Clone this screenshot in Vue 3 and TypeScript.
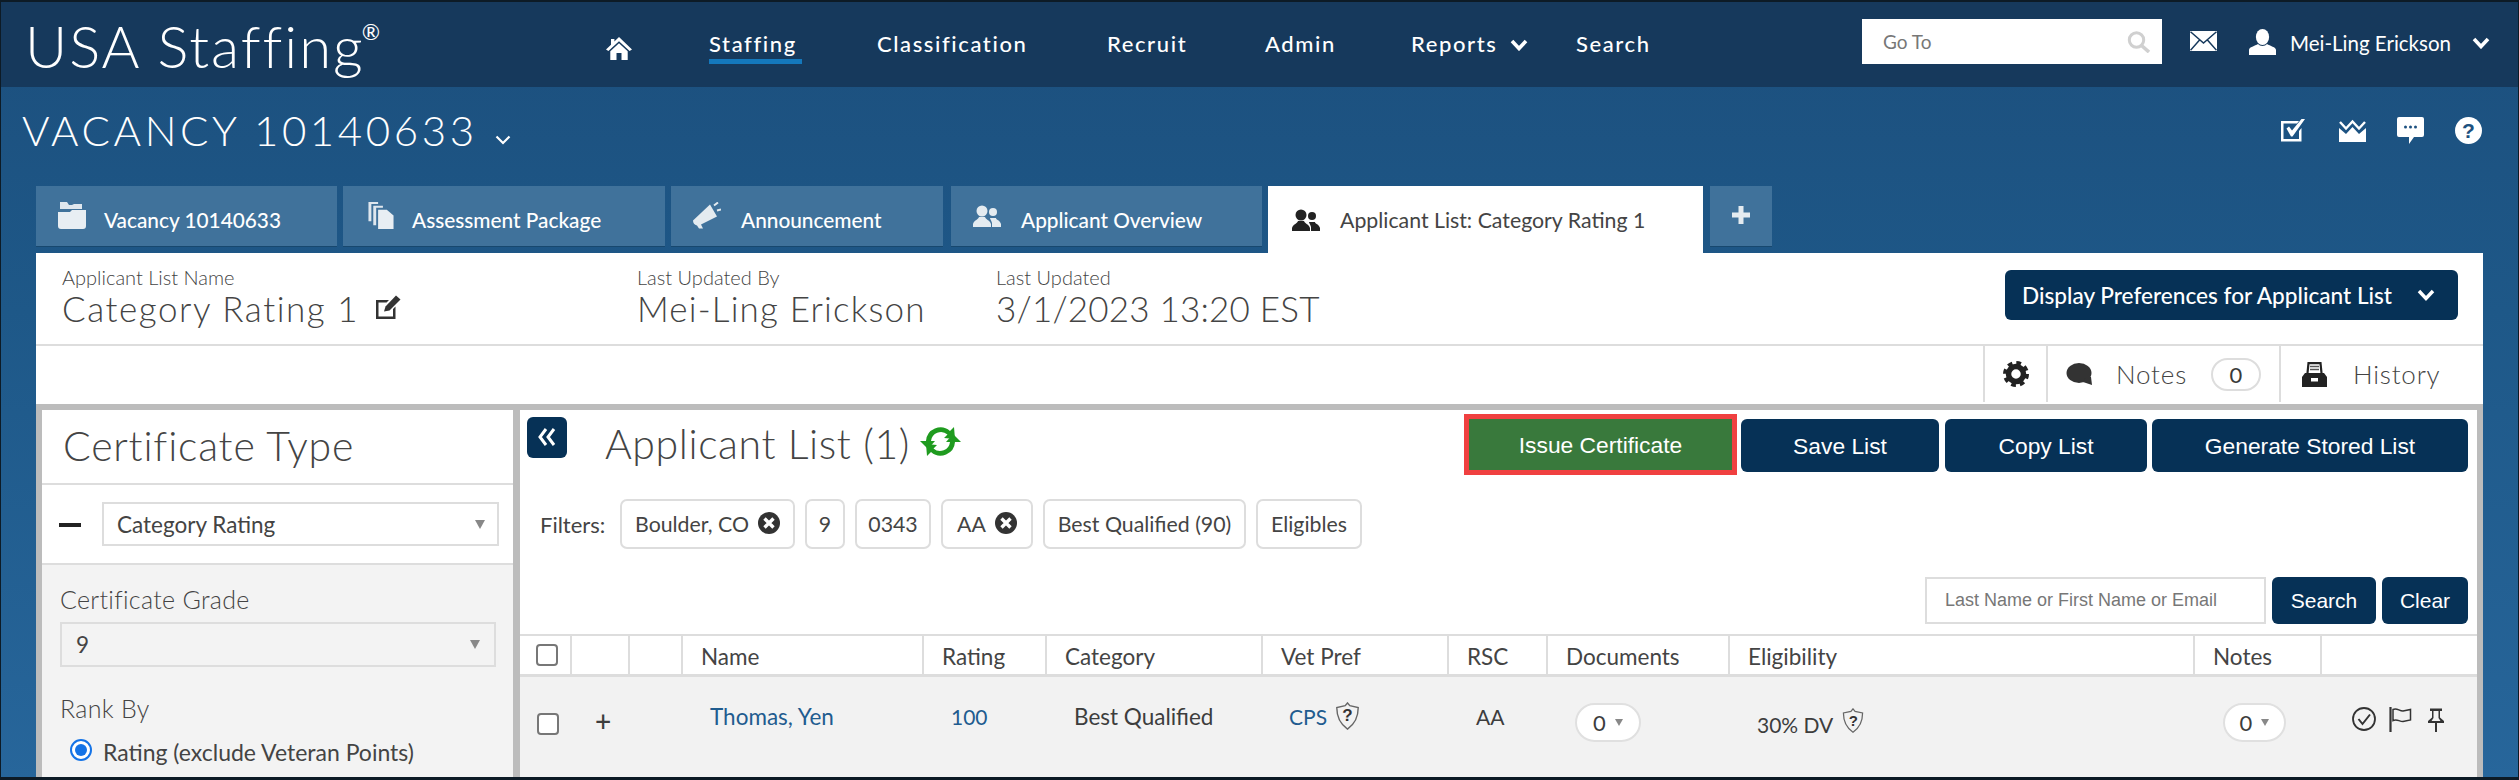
<script setup lang="ts">
const navItems = [
  { label: 'Staffing', width: 93, active: true },
  { label: 'Classification', width: 155, active: false },
  { label: 'Recruit', width: 83, active: false },
  { label: 'Admin', width: 71, active: false },
]
const tabs = [
  { label: 'Vacancy 10140633', width: 301, icon: 'folder', gap: 0 },
  { label: 'Assessment Package', width: 322, icon: 'docs', gap: 0 },
  { label: 'Announcement', width: 272, icon: 'horn', gap: 0 },
  { label: 'Applicant Overview', width: 311, icon: 'people', gap: 2 },
]
const infos = [
  { label: 'Applicant List Name', value: 'Category Rating 1', width: 575, edit: true, spacing: 1.55 },
  { label: 'Last Updated By', value: 'Mei-Ling Erickson', width: 359, edit: false, spacing: 1.15 },
  { label: 'Last Updated', value: '3/1/2023 13:20 EST', width: 500, edit: false, spacing: 0.2 },
]
const chips = [
  { label: 'Boulder, CO', width: 175, close: true },
  { label: '9', width: 40, close: false },
  { label: '0343', width: 76, close: false },
  { label: 'AA', width: 92, close: true },
  { label: 'Best Qualified (90)', width: 203, close: false },
  { label: 'Eligibles', width: 106, close: false },
]
const columns = [
  { label: '', width: 52 },
  { label: '', width: 58 },
  { label: '', width: 53 },
  { label: 'Name', width: 241 },
  { label: 'Rating', width: 123 },
  { label: 'Category', width: 216 },
  { label: 'Vet Pref', width: 186 },
  { label: 'RSC', width: 99 },
  { label: 'Documents', width: 182 },
  { label: 'Eligibility', width: 465 },
  { label: 'Notes', width: 127 },
  { label: '', width: 155 },
]
</script>

<template>
  <div class="app">
    <header class="nav">
      <div class="logo">USA Staffing<sup class="reg">®</sup></div>
      <svg class="home" viewBox="0 0 26 23"><path d="M13 0 L26 12.5 L23.6 14 L13 4.2 L2.4 14 L0 12.5 L5 7.7 L5 2 L8.4 2 L8.4 4.4 Z M4.3 14.2 L13 6.2 L21.7 14.2 L21.7 23 L15.5 23 L15.5 16 L10.5 16 L10.5 23 L4.3 23 Z" fill="#fff"/></svg>
      <nav class="menu">
        <a v-for="item in navItems" :key="item.label" class="menu-item" :class="{ active: item.active }" :style="{ width: item.width + 'px' }">{{ item.label }}</a>
        <a class="menu-item reports">Reports<svg class="chev" viewBox="0 0 18 12"><path d="M2 2 L9 9.5 L16 2" fill="none" stroke="#fff" stroke-width="3.6"/></svg></a>
        <a class="menu-item search-link">Search</a>
      </nav>
      <div class="goto">
        <span>Go To</span>
        <svg class="goto-icon" viewBox="0 0 24 22"><circle cx="9.5" cy="9" r="7.2" fill="none" stroke="#d0d0d0" stroke-width="3"/><path d="M14.5 14.5 L22 21" stroke="#d0d0d0" stroke-width="3.6"/></svg>
      </div>
      <svg class="mail" viewBox="0 0 27 20"><rect width="27" height="20" fill="#fff"/><path d="M0.5 0.8 L13.5 12 L26.5 0.8 M0.5 19.2 L10 8.5 M26.5 19.2 L17 8.5" fill="none" stroke="#16395c" stroke-width="1.5"/></svg>
      <svg class="user" viewBox="0 0 27 26"><ellipse cx="13.5" cy="8" rx="6.6" ry="8" fill="#fff"/><path d="M0 26 V21 C0 18 6 17 9 15 C11 17.5 16 17.5 18 15 C21 17 27 18 27 21 V26 Z" fill="#fff"/></svg>
      <span class="username">Mei-Ling Erickson</span>
      <svg class="chev user-chev" viewBox="0 0 18 12"><path d="M2 2 L9 9.5 L16 2" fill="none" stroke="#fff" stroke-width="3.6"/></svg>
    </header>

    <section class="title-row">
      <h1 class="vacancy">VACANCY 10140633</h1>
      <svg class="vac-chev" viewBox="0 0 16 10"><path d="M1.5 1.5 L8 8 L14.5 1.5" fill="none" stroke="#fff" stroke-width="2.2"/></svg>
      <div class="title-icons">
        <svg viewBox="0 0 24 24" class="ti"><path d="M0 3 H18 L16 5.5 H2.5 V21 H18 V13 L20.5 10 V23.5 H0 Z" fill="#fff"/><path d="M5.5 10.5 L8 8.5 L11 12.5 L20.5 1 L24 1 L11.5 18.5 H10 Z" fill="#fff"/></svg>
        <svg viewBox="0 0 27 23" class="ti crown"><path d="M0 9 L7 15 L13.5 8 L20 15 L27 9 V23 H0 Z" fill="#fff"/><path d="M1 3 L7 9.5 L13.5 2.5 L20 9.5 L26 3" fill="none" stroke="#fff" stroke-width="2.4"/></svg>
        <svg viewBox="0 0 27 27" class="ti chat"><path d="M2 0 H25 Q27 0 27 2 V18 Q27 20 25 20 H17 L12 27 V20 H2 Q0 20 0 18 V2 Q0 0 2 0 Z" fill="#fff"/><circle cx="8.5" cy="10" r="1.5" fill="#1d5180"/><circle cx="13.5" cy="10" r="1.5" fill="#1d5180"/><circle cx="18.5" cy="10" r="1.5" fill="#1d5180"/></svg>
        <span class="help">?</span>
      </div>
    </section>

    <section class="tabs">
      <div v-for="tab in tabs" :key="tab.label" class="tab" :style="{ width: tab.width + 'px', marginLeft: tab.gap + 'px' }">
        <svg v-if="tab.icon === 'folder'" class="tab-icon" viewBox="0 0 28 27"><path d="M2 0 H9 L11 3 H14 L16 2 H24 V7 H2 Z" fill="#dfe7ee"/><path d="M0 10 H12 L14 8 H28 V24 Q28 27 25 27 H3 Q0 27 0 24 Z" fill="#e8eef3"/></svg>
        <svg v-else-if="tab.icon === 'docs'" class="tab-icon docs" viewBox="0 0 26 28"><path d="M0 0 H10 V2 H3 V20 H0 Z M5 4 H15 V6 H8 V24 H5 Z" fill="#dfe7ee"/><path d="M10 8 H19 L26 14 V28 H10 Z" fill="#e8eef3"/></svg>
        <svg v-else-if="tab.icon === 'horn'" class="tab-icon horn" viewBox="0 0 28 26"><path d="M0 18 L17 2 L24 14 L8 22 L10 26 H6 L4 23 Q0 22 0 18 Z" fill="#e4ebf0"/><path d="M21 3 L25 0 M24 8 L28 7" stroke="#e4ebf0" stroke-width="2"/></svg>
        <svg v-else class="tab-icon people" viewBox="0 0 28 22"><circle cx="9" cy="6" r="5.5" fill="#e4ebf0"/><path d="M0 22 V19 C1 15 5 15 6 12 H12 C13 15 17 15 18 19 V22 Z" fill="#e4ebf0"/><circle cx="20" cy="7" r="4" fill="#e4ebf0"/><path d="M19 22 V18 C18 15 17 14 17 13 H23 C23 15 27 15 28 19 V22 Z" fill="#e4ebf0"/></svg>
        <span>{{ tab.label }}</span>
      </div>
      <div class="tab tab-active">
        <svg class="tab-icon people" viewBox="0 0 28 22"><circle cx="9" cy="6" r="5.5" fill="#222"/><path d="M0 22 V19 C1 15 5 15 6 12 H12 C13 15 17 15 18 19 V22 Z" fill="#222"/><circle cx="20" cy="7" r="4" fill="#222"/><path d="M19 22 V18 C18 15 17 14 17 13 H23 C23 15 27 15 28 19 V22 Z" fill="#222"/></svg>
        <span>Applicant List: Category Rating 1</span>
      </div>
      <div class="tab tab-plus">
        <svg viewBox="0 0 18 18" class="plus"><path d="M6.5 0 H11.5 V6.5 H18 V11.5 H11.5 V18 H6.5 V11.5 H0 V6.5 H6.5 Z" fill="#e4ebf0"/></svg>
      </div>
    </section>

    <main class="panel">
      <section class="info">
        <div class="info-cols">
          <div v-for="info in infos" :key="info.label" class="info-col" :style="{ width: info.width + 'px' }">
            <div class="info-label">{{ info.label }}</div>
            <div class="info-value" :style="{ letterSpacing: info.spacing + 'px' }">
              {{ info.value }}
              <svg v-if="info.edit" class="edit" viewBox="0 0 25 24"><path d="M0 5 H13 L10.5 7.5 H2.5 V21.5 H17 V14 L19.5 11.5 V24 H0 Z" fill="#333"/><path d="M8 16.5 L9.5 11.5 L20 0.5 L24.5 4.5 L13.5 15.5 Z" fill="#333"/></svg>
            </div>
          </div>
        </div>
        <button class="btn prefs">Display Preferences for Applicant List<svg class="chev" viewBox="0 0 18 12"><path d="M2 2 L9 9.5 L16 2" fill="none" stroke="#fff" stroke-width="3.4"/></svg></button>
      </section>

      <section class="toolbar">
        <div class="tool tool-gear">
          <svg viewBox="0 0 26 26" class="gear"><circle cx="13" cy="13" r="7.5" fill="none" stroke="#222" stroke-width="5.5"/><circle cx="13" cy="13" r="11" fill="none" stroke="#222" stroke-width="4" stroke-dasharray="4.64 4"/></svg>
        </div>
        <div class="tool tool-notes">
          <svg viewBox="0 0 27 22" class="bubble"><ellipse cx="13" cy="10" rx="12.5" ry="10" fill="#333"/><path d="M20 14 L25 14 L26 22 L17 19 Z" fill="#333"/></svg>
          <span class="tool-text">Notes</span>
          <span class="count">0</span>
        </div>
        <div class="tool tool-history">
          <svg viewBox="0 0 25 25" class="archive"><path d="M5.5 11 L6.5 1.2 H18.5 L19.5 11" fill="none" stroke="#222" stroke-width="2.2"/><path d="M8 4.5 H17 M8 7.5 H17" stroke="#555" stroke-width="1.5"/><path d="M3 11 H22 L25 15 V25 H0 V15 Z" fill="#222"/><path d="M9 16 H16 V19.5 H9 Z" fill="#fff"/></svg>
          <span class="tool-text">History</span>
        </div>
      </section>

      <section class="workspace">
        <aside class="side">
          <h2 class="side-title">Certificate Type</h2>
          <div class="side-select-row">
            <span class="minus"></span>
            <div class="select select-main"><span>Category Rating</span><i class="arrow"></i></div>
          </div>
          <div class="side-body">
            <div class="side-label">Certificate Grade</div>
            <div class="select select-grade"><span>9</span><i class="arrow"></i></div>
            <div class="side-label rank">Rank By</div>
            <label class="radio-row"><span class="radio"></span>Rating (exclude Veteran Points)</label>
          </div>
        </aside>

        <section class="list">
          <div class="list-top">
            <button class="collapse">
              <svg viewBox="0 0 20 20"><path d="M9 2 L3 10 L9 18 M17 2 L11 10 L17 18" fill="none" stroke="#fff" stroke-width="3"/></svg>
            </button>
            <h2 class="list-title">Applicant List (1)</h2>
            <svg class="refresh" viewBox="0 0 41 33"><path d="M6 16 A14.5 14.5 0 0 1 30 6 L34 2 L35 14 L24 13 L27.5 9.5 A10 10 0 0 0 11 16 L15 16 L8 24 L0 16 Z" fill="#1f9b1f"/><path d="M35 17 A14.5 14.5 0 0 1 11 27 L7 31 L6 19 L17 20 L13.5 23.5 A10 10 0 0 0 30 17 L26 17 L33 9 L41 17 Z" fill="#1f9b1f"/></svg>
            <div class="actions">
              <button class="btn issue">Issue Certificate</button>
              <button class="btn act save">Save List</button>
              <button class="btn act copy">Copy List</button>
              <button class="btn act generate">Generate Stored List</button>
            </div>
          </div>

          <div class="filters">
            <span class="filters-label">Filters:</span>
            <span v-for="chip in chips" :key="chip.label" class="chip" :style="{ width: chip.width + 'px' }">
              {{ chip.label }}
              <svg v-if="chip.close" class="chip-x" viewBox="0 0 22 22"><circle cx="11" cy="11" r="11" fill="#333"/><path d="M6.5 6.5 L15.5 15.5 M15.5 6.5 L6.5 15.5" stroke="#fff" stroke-width="3.4"/></svg>
            </span>
          </div>

          <div class="search-row">
            <div class="search-box">Last Name or First Name or Email</div>
            <button class="btn s-search">Search</button>
            <button class="btn s-clear">Clear</button>
          </div>

          <div class="thead">
            <div v-for="(col, i) in columns" :key="i" class="th" :class="{ 'th-last': i === columns.length - 1 }" :style="{ width: col.width + 'px' }">
              <span v-if="i === 0" class="checkbox"></span>
              {{ col.label }}
            </div>
          </div>

          <div class="trow">
            <div class="td td-check" :style="{ width: columns[0].width + 'px' }"><span class="checkbox"></span></div>
            <div class="td td-plus" :style="{ width: columns[1].width + 'px' }">+</div>
            <div class="td" :style="{ width: columns[2].width + 'px' }"></div>
            <div class="td td-link td-name" :style="{ width: columns[3].width + 'px' }">Thomas, Yen</div>
            <div class="td td-link td-rating" :style="{ width: columns[4].width + 'px' }">100</div>
            <div class="td td-cat" :style="{ width: columns[5].width + 'px' }">Best Qualified</div>
            <div class="td td-link td-vet" :style="{ width: columns[6].width + 'px' }">CPS
              <span class="shield-wrap">
                <svg class="shield" viewBox="0 0 27 30"><path d="M13.5 1 L16 4 L25 6 C25 16 21 24 13.5 29 C6 24 2 16 2 6 L11 4 Z" fill="none" stroke="#666" stroke-width="1.5"/></svg>
                <span class="q">?</span>
              </span>
            </div>
            <div class="td td-rsc" :style="{ width: columns[7].width + 'px' }">AA</div>
            <div class="td td-doc" :style="{ width: columns[8].width + 'px' }"><span class="pill">0<i class="arrow small"></i></span></div>
            <div class="td td-elig" :style="{ width: columns[9].width + 'px' }">30% DV
              <span class="shield-wrap elig-shield">
                <svg class="shield" viewBox="0 0 27 30"><path d="M13.5 1 L16 4 L25 6 C25 16 21 24 13.5 29 C6 24 2 16 2 6 L11 4 Z" fill="none" stroke="#666" stroke-width="1.5"/></svg>
                <span class="q">?</span>
              </span>
            </div>
            <div class="td td-notes" :style="{ width: columns[10].width + 'px' }"><span class="pill note-pill">0<i class="arrow small"></i></span></div>
            <div class="td td-icons" :style="{ width: columns[11].width + 'px' }">
              <svg class="ri" viewBox="0 0 27 24"><circle cx="13" cy="12" r="11" fill="none" stroke="#333" stroke-width="1.8"/><path d="M7.5 12 L11.5 17 L19 7.5" fill="none" stroke="#333" stroke-width="2"/></svg>
              <svg class="ri flag" viewBox="0 0 23 25"><path d="M1.5 0 V25" stroke="#333" stroke-width="2.2"/><path d="M4 2.5 C8 0.5 10 4 14 4 L21.5 2.5 V13 L14 14.5 C10 14.5 8 11.5 4 13.5 Z" fill="none" stroke="#333" stroke-width="1.5"/></svg>
              <svg class="ri pin" viewBox="0 0 18 25"><path d="M3 1.5 H15 V4 H13 V10.5 L17 14 V16 H1 V14 L5 10.5 V4 H3 Z" fill="#333"/><path d="M6.5 4 H11.5 V11 L13.5 14 H4.5 L6.5 11 Z" fill="#f2f2f2"/><path d="M9 16 V25" stroke="#333" stroke-width="2"/></svg>
            </div>
          </div>
        </section>
      </section>
    </main>
  </div>
</template>

<style scoped>
* { box-sizing: border-box; }
.app {
  position: relative;
  width: 2519px;
  height: 780px;
  overflow: hidden;
  font-family: Lato, "Open Sans", sans-serif;
  background: linear-gradient(180deg, #1c4f7d 0%, #1e5888 40%, #27669b 100%);
  color: #3a3a3a;
}
.app::after {
  content: "";
  position: absolute;
  inset: 0;
  border: solid #0d1b26;
  border-width: 2px 1px 3px 1px;
  pointer-events: none;
}
button { font-family: inherit; border: 0; cursor: pointer; }

.nav {
  height: 87px;
  display: flex;
  align-items: center;
  background: #16395c;
  color: #fff;
  padding-left: 25px;
}
.logo {
  width: 581px;
  font-weight: 300;
  font-size: 58px;
  letter-spacing: 2px;
  line-height: 87px;
  white-space: nowrap;
  margin-top: 4px;
}
.reg {
  font-size: 22px;
  vertical-align: 28px;
  line-height: 0;
  font-weight: 400;
  letter-spacing: 0;
  margin-left: -3px;
}
.home { width: 26px; height: 23px; margin-right: 77px; margin-top: 10px; flex: none; }
.menu { display: flex; gap: 75px; align-items: center; width: 1153px; }
.menu-item {
  position: relative;
  font-size: 22px;
  font-weight: 500;
  letter-spacing: 1.6px;
  white-space: nowrap;
  margin-top: 0;
}
.menu-item.active::after {
  content: "";
  position: absolute;
  left: 0;
  right: 0;
  bottom: -7px;
  height: 5px;
  background: #1478bc;
}
.reports { width: 120px; display: flex; align-items: center; }
.reports .chev { margin-left: 13px; margin-top: 3px; }
.search-link { margin-left: -30px; }
.chev { width: 18px; height: 12px; flex: none; }
.goto {
  width: 300px;
  height: 45px;
  margin-top: -4px;
  background: #fff;
  color: #777;
  font-size: 19px;
  display: flex;
  align-items: center;
  justify-content: space-between;
  padding: 0 11px 0 21px;
  flex: none;
}
.goto-icon { width: 24px; height: 22px; }
.mail { width: 27px; height: 20px; margin-left: 28px; margin-top: -6px; flex: none; }
.user { width: 27px; height: 26px; margin-left: 32px; margin-top: -4px; flex: none; }
.username { margin-left: 14px; font-size: 20.5px; width: 182px; white-space: nowrap; margin-top: -2px; flex: none; }
.user-chev { margin-top: -2px; }

.title-row {
  height: 99px;
  display: flex;
  align-items: center;
  padding-left: 22px;
  color: #fff;
}
.vacancy {
  margin: 0;
  font-size: 42px;
  font-weight: 300;
  letter-spacing: 3.6px;
  width: 473px;
  white-space: nowrap;
  margin-top: -13px;
}
.vac-chev { width: 16px; height: 10px; margin-top: 6px; flex: none; }
.title-icons {
  margin-left: 1770px;
  display: flex;
  align-items: center;
  margin-top: -13px;
}
.ti { width: 24px; height: 24px; flex: none; }
.crown { width: 27px; height: 23px; margin-left: 34px; }
.chat { width: 27px; height: 27px; margin-left: 31px; }
.help {
  width: 27px;
  height: 27px;
  margin-left: 31px;
  border-radius: 50%;
  background: #fff;
  color: #1d5180;
  font: 700 21px/27px "Liberation Sans", sans-serif;
  text-align: center;
}

.tabs {
  height: 67px;
  display: flex;
  align-items: flex-start;
  gap: 6px;
  padding-left: 36px;
}
.tab {
  height: 60px;
  background: #40729b;
  color: #fff;
  display: flex;
  align-items: center;
  font-size: 20.8px;
  font-weight: 500;
  white-space: nowrap;
  padding-left: 22px;
  padding-top: 6px;
  box-shadow: 0 1px 0 #17486f;
}
.tab-icon { width: 28px; height: 27px; margin-right: 18px; flex: none; margin-top: -7px; }
.docs { margin-left: 2px; margin-right: 17px; }
.horn { margin-left: 0; margin-right: 20px; }
.people { height: 22px; margin-right: 20px; }
.tab-active {
  width: 435px;
  height: 67px;
  background: #fff;
  color: #444;
  padding-bottom: 5px;
  padding-left: 24px;
  font-weight: 400;
  font-size: 21.3px;
  box-shadow: none;
}
.tab-active .people { margin-top: 0; margin-right: 20px; }
.tab-plus { width: 62px; padding-left: 22px; padding-top: 0; margin-left: 1px; }
.plus { width: 18px; height: 18px; margin-top: -3px; }

.panel { width: 2447px; margin-left: 36px; background: #fff; height: 527px; }
.info {
  height: 93px;
  border-bottom: 2px solid #ddd;
  display: flex;
  padding-left: 26px;
}
.info-cols { display: flex; width: 1943px; }
.info-col { padding-top: 13px; white-space: nowrap; }
.info-label { font-size: 20px; font-weight: 300; line-height: 22px; color: #444; }
.info-value { font-size: 35px; font-weight: 300; line-height: 40px; color: #444; display: flex; align-items: center; }
.edit { width: 25px; height: 24px; margin-left: 17px; flex: none; margin-top: -2px; }
.btn { background: #063156; color: #fff; border-radius: 6px; font-family: "Liberation Sans", Arial, sans-serif; }
.prefs {
  width: 453px;
  height: 50px;
  margin-top: 17px;
  font-family: Lato, sans-serif;
  font-size: 22.6px;
  font-weight: 500;
  display: flex;
  align-items: center;
  justify-content: space-between;
  padding: 0 23px 0 17px;
  white-space: nowrap;
}
.toolbar {
  height: 58px;
  display: flex;
  justify-content: flex-end;
  align-items: stretch;
  padding-bottom: 2px;
}
.tool { border-left: 2px solid #ddd; display: flex; align-items: center; }
.tool-gear { width: 63px; padding-left: 18px; }
.gear { width: 26px; height: 26px; }
.tool-notes { width: 233px; padding-left: 18px; }
.bubble { width: 27px; height: 22px; margin-right: 23px; }
.tool-text { font-size: 26px; font-weight: 300; color: #444; letter-spacing: .8px; }
.count {
  margin-left: 24px;
  width: 50px;
  height: 33px;
  border: 2px solid #ddd;
  border-radius: 17px;
  text-align: center;
  font-size: 22px;
  line-height: 29px;
}
.tool-history { width: 204px; padding-left: 21px; }
.archive { width: 25px; height: 25px; margin-right: 26px; }

.workspace {
  height: 376px;
  background: #bcbcbc;
  padding: 6px 6px 0;
  display: flex;
  gap: 7px;
}
.side { width: 471px; background: #fff; display: flex; flex-direction: column; }
.side-title {
  margin: 0;
  height: 75px;
  border-bottom: 2px solid #ddd;
  font-size: 41px;
  font-weight: 300;
  line-height: 72px;
  padding-left: 21px;
  color: #444;
  letter-spacing: .8px;
}
.side-select-row { height: 80px; border-bottom: 2px solid #ddd; display: flex; align-items: flex-start; padding: 17px 0 0 17px; }
.minus { width: 22px; height: 4px; background: #222; margin-top: 21px; }
.select {
  height: 44px;
  border: 2px solid #ddd;
  display: flex;
  align-items: center;
  justify-content: space-between;
  font-size: 22.5px;
  color: #444;
}
.select-main { width: 397px; margin-left: 21px; padding: 0 12px 0 13px; }
.arrow {
  width: 0;
  height: 0;
  border-left: 5px solid transparent;
  border-right: 5px solid transparent;
  border-top: 9px solid #888;
}
.side-body { background: #f3f3f3; flex: 1; padding: 21px 0 0 18px; }
.side-label { font-size: 25px; font-weight: 300; color: #444; line-height: 26px; letter-spacing: .3px; }
.select-grade { width: 436px; height: 45px; margin-top: 10px; padding: 0 14px 0 14px; background: #f3f3f3; }
.rank { margin-top: 28px; }
.radio-row { display: flex; align-items: center; font-size: 23px; color: #444; margin-top: 17px; padding-left: 10px; white-space: nowrap; }
.radio {
  width: 22px;
  height: 22px;
  border-radius: 50%;
  border: 2px solid #1473e6;
  background: #fff;
  margin-right: 11px;
  margin-top: -5px;
  position: relative;
  flex: none;
}
.radio::after { content: ""; position: absolute; inset: 3px; border-radius: 50%; background: #1473e6; }

.list { width: 1957px; background: #fff; display: flex; flex-direction: column; }
.list-top { height: 89px; display: flex; align-items: flex-start; padding: 7px 9px 0 7px; }
.collapse { width: 40px; height: 41px; background: #063156; border-radius: 6px; padding: 10px 9px; display: flex; margin-right: 38px; }
.collapse svg { width: 22px; height: 20px; }
.list-title { margin: 0; font-size: 41px; font-weight: 300; line-height: 56px; color: #444; letter-spacing: .6px; width: 315px; white-space: nowrap; margin-top: -1px; }
.refresh { width: 41px; height: 33px; margin-top: 8px; flex: none; }
.actions { margin-left: auto; display: flex; align-items: flex-start; margin-top: -3px; }
.actions .btn { font-size: 22.8px; height: 53px; margin-top: 5px; margin-left: 5px; white-space: nowrap; padding-top: 3px; }
.actions .issue { width: 273px; height: 61px; margin-top: 0; border-radius: 0; background: #39793c; border: 5px solid #f04040; margin-left: 0; }
.actions .save { width: 198px; margin-left: 4px; }
.actions .copy { width: 202px; margin-left: 6px; }
.actions .generate { width: 316px; }

.filters { height: 50px; display: flex; align-items: center; padding-left: 20px; gap: 10px; }
.filters-label { font-size: 22px; color: #444; width: 70px; white-space: nowrap; }
.chip {
  height: 50px;
  border: 2px solid #ddd;
  border-radius: 7px;
  display: flex;
  align-items: center;
  justify-content: center;
  gap: 9px;
  font-size: 21.3px;
  color: #444;
  white-space: nowrap;
}
.chip-x { width: 22px; height: 22px; margin-top: -3px; }

.search-row { display: flex; margin-top: 28px; padding-left: 1405px; gap: 6px; height: 47px; }
.search-box {
  width: 341px;
  border: 2px solid #ddd;
  font: 18px/43px "Liberation Sans", Arial, sans-serif;
  color: #777;
  padding-left: 18px;
  white-space: nowrap;
}
.search-row .btn { font-size: 21px; }
.s-search { width: 104px; }
.s-clear { width: 86px; }

.thead { display: flex; margin-top: 10px; height: 43px; border-top: 2px solid #ddd; border-bottom: 3px solid #ddd; }
.th {
  border-right: 2px solid #ddd;
  font-size: 22.5px;
  color: #444;
  padding-left: 18px;
  padding-top: 3px;
  line-height: 35px;
  white-space: nowrap;
  display: flex;
  align-items: center;
}
.th-last { border-right: 0; }
.th:first-child { padding-left: 16px; padding-top: 0; }
.checkbox { width: 22px; height: 22px; border: 2px solid #777; border-radius: 4px; background: #fff; display: block; }
.trow { display: flex; height: 100px; background: #f2f2f2; }
.td { font-size: 22.5px; color: #3d3d3d; white-space: nowrap; flex: none; padding-top: 26px; }
.td-check { padding: 36px 0 0 17px; }
.td-plus { padding-top: 27px; padding-left: 23px; font-size: 28px; font-weight: 500; }
.td-link { color: #1f5c8f; }
.td-name { padding-left: 27px; }
.td-rating { padding-left: 27px; font-size: 21px; padding-top: 27px; }
.td-cat { padding-left: 27px; }
.td-vet { padding-left: 26px; display: flex; align-items: flex-start; font-size: 21px; padding-top: 27px; }
.shield-wrap { position: relative; display: block; width: 27px; height: 28px; margin-left: 7px; margin-top: -2px; flex: none; }
.shield { width: 100%; height: 100%; display: block; }
.q { position: absolute; inset: 0; font: 700 17px/28px "Liberation Sans", sans-serif; color: #333; text-align: center; }
.elig-shield { width: 24px; height: 25px; margin-left: 8px; margin-top: -4px; }
.elig-shield .q { line-height: 25px; font-size: 15px; }
.td-rsc { padding-left: 27px; font-size: 21px; padding-top: 27px; }
.td-doc { padding: 26px 0 0 27px; }
.pill {
  width: 66px;
  height: 39px;
  border: 2px solid #e0e0e0;
  border-radius: 20px;
  background: #fff;
  display: flex;
  align-items: center;
  justify-content: center;
  gap: 9px;
  font-size: 22px;
}
.note-pill { width: 63px; }
.arrow.small { border-left-width: 4px; border-right-width: 4px; border-top-width: 7px; }
.td-elig { padding: 35px 0 0 27px; display: flex; align-items: flex-start; font-size: 21px; }
.td-notes { padding: 26px 0 0 28px; }
.td-icons { padding: 30px 0 0 29px; display: flex; align-items: flex-start; gap: 11px; }
.ri { width: 27px; height: 24px; flex: none; }
.flag { width: 23px; height: 25px; }
.pin { width: 18px; height: 25px; margin-left: 4px; }
</style>
